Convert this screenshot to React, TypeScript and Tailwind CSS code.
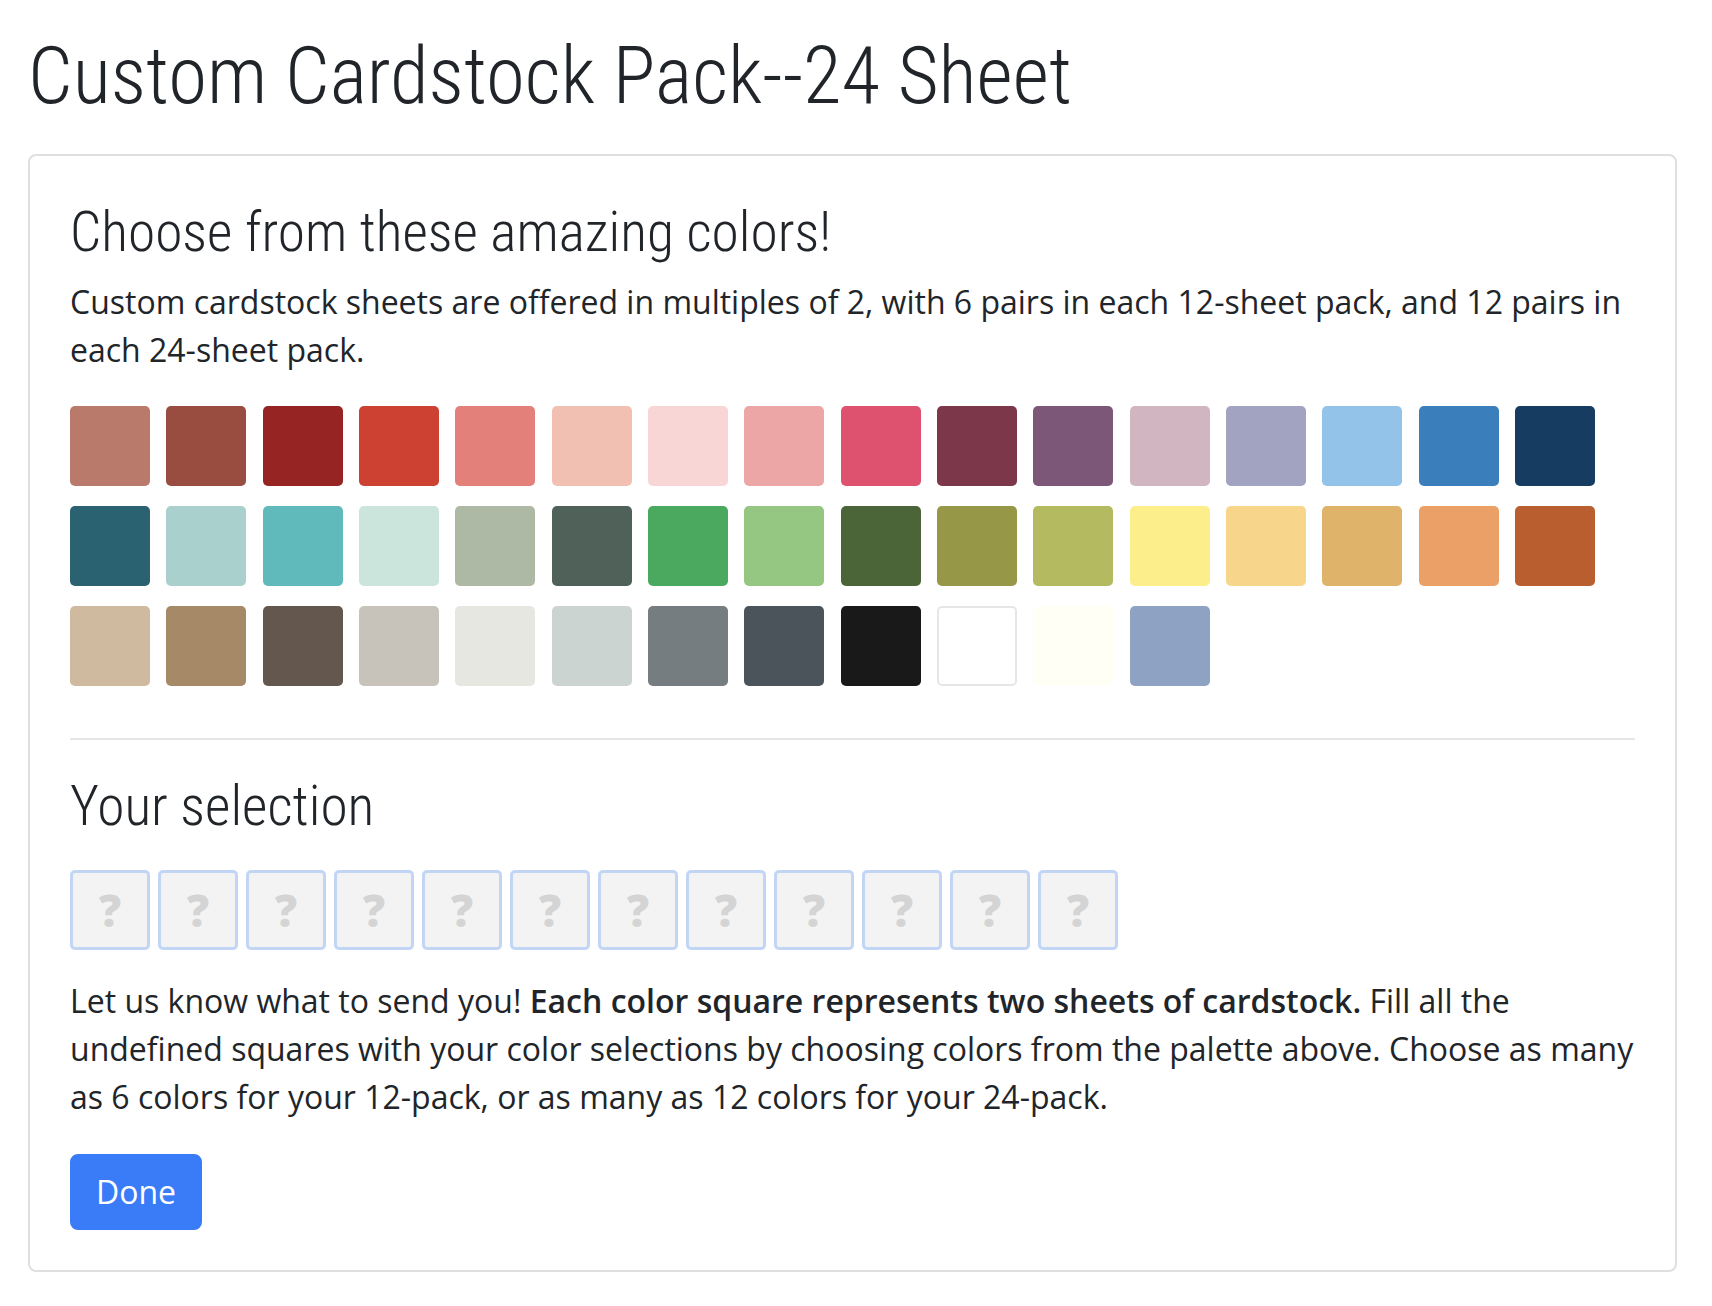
const palette = [
  '#b97a6b', '#984d40', '#962423', '#cd4133', '#e3807a', '#f2bfb3', '#f7d6d5', '#eca6a5',
  '#de526f', '#7c374a', '#7c5777', '#d1b6c1', '#a1a3c1', '#93c3e9', '#3a7fbc', '#173c62',
  '#2a6271', '#a9d0cc', '#60b9ba', '#cbe4dc', '#adb9a4', '#4f6158', '#4ba95f', '#95c682',
  '#4b6438', '#979748', '#b3ba60', '#fcee8a', '#f7d58a', '#dfb36a', '#eba067', '#b95f2f',
  '#cfb99f', '#a68967', '#64574d', '#c7c2ba', '#e5e7e0', '#cbd4d1', '#757d80', '#4b535b',
  '#191919', '#ffffff', '#fffff6', '#8ea3c3',
];

const slots = Array.from({ length: 12 }, (_, i) => i);

export default function App() {
  return (
    <div className="min-h-screen bg-white pt-[28px] pl-[28px] pr-[35px] pb-[35px] text-[#212529]">
      <h1 className="font-['Roboto_Condensed','Liberation_Sans_Narrow',sans-serif] font-light text-[79px] leading-[96px] mb-[30px]">
        Custom Cardstock Pack--24 Sheet
      </h1>

      <div className="rounded-[8px] border-2 border-[#dfdfdf] px-[40px] pt-[43px] pb-[40px]">
        <h3 className="font-['Roboto_Condensed','Liberation_Sans_Narrow',sans-serif] font-light text-[55.4px] leading-[67px] mb-[12px]">
          Choose from these amazing colors!
        </h3>
        <p className="font-['Open_Sans',sans-serif] text-[32px] leading-[48px] mb-[32px]">
          Custom cardstock sheets are offered in multiples of 2, with 6 pairs in each 12-sheet pack, and 12 pairs in
          each 24-sheet pack.
        </p>

        {/* palette */}
        <div className="flex flex-wrap gap-x-[16.33px] gap-y-[20px]">
          {palette.map((c, i) => (
            <button
              key={i}
              type="button"
              className={
                c === '#ffffff'
                  ? 'w-[80px] h-[80px] rounded-[5px] border-2 border-[#e6e6e6]'
                  : 'w-[80px] h-[80px] rounded-[5px]'
              }
              style={{ backgroundColor: c }}
            />
          ))}
        </div>

        <hr className="mt-[52px] mb-[33px] border-t-2 border-[#e6e6e6]" />

        <h3 className="font-['Roboto_Condensed','Liberation_Sans_Narrow',sans-serif] font-light text-[55.4px] leading-[67px] mb-[30px]">
          Your selection
        </h3>

        <div className="flex gap-[8px]">
          {slots.map((i) => (
            <div
              key={i}
              className="w-[80px] h-[80px] rounded-[5px] border-[3px] border-[#c3d5f5] bg-[#f3f3f3] flex items-center justify-center font-['Open_Sans',sans-serif] font-extrabold text-[44px] leading-none text-[#d4d4d4]"
            >
              ?
            </div>
          ))}
        </div>

        <p className="font-['Open_Sans',sans-serif] text-[32px] leading-[48px] mt-[27px] mb-[33px]">
          Let us know what to send you! <strong className="font-semibold">Each color square represents two sheets of cardstock.</strong> Fill
          all the undefined squares with your color selections by choosing colors from the palette above. Choose as many
          as 6 colors for your 12-pack, or as many as 12 colors for your 24-pack.
        </p>

        <button
          type="button"
          className="rounded-[8px] border-2 border-[#3a7bf7] bg-[#3a7bf7] px-[24px] py-[12px] font-['Open_Sans',sans-serif] text-[32px] leading-[48px] text-white"
        >
          Done
        </button>
      </div>
    </div>
  );
}
